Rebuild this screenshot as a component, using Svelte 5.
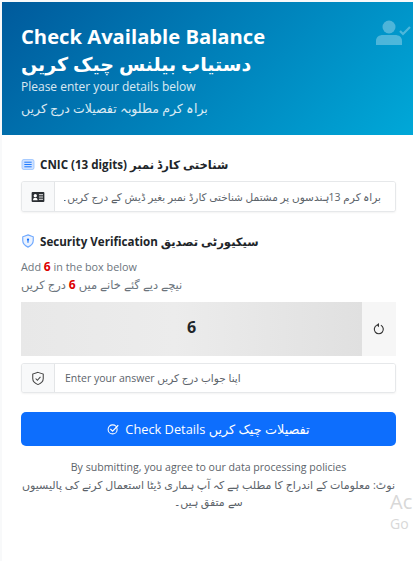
<script>
  let number = 6;
</script>

<div class="page">
  <header class="hero">
    <div class="hero-text">
      <h1>Check Available Balance</h1>
      <h2 lang="ur">دستیاب بیلنس چیک کریں</h2>
      <p>Please enter your details below</p>
      <p class="ur-sub" lang="ur">براہ کرم مطلوبہ تفصیلات درج کریں</p>
    </div>
    <svg class="hero-icon" viewBox="0 0 36 26" aria-hidden="true">
      <circle cx="14" cy="7" r="6.500" fill="currentColor" />
      <path d="M1 25v-4c0-4 3-6 7-6h12c4 0 7 2 7 6v4z" fill="currentColor" />
      <path d="M25 11l3 3 7-7" fill="none" stroke="currentColor" stroke-width="2.200" />
    </svg>
  </header>

  <main class="body">
    <label class="label" for="cnic">
      <svg class="lab-icon" viewBox="0 0 14 12" aria-hidden="true">
        <rect x="0.500" y="0.500" width="13" height="11" rx="2" fill="#cfe2ff" stroke="#9ec5fe" />
        <path d="M3 3.500h8M3 6h8M3 8.500h8" stroke="#0d6efd" />
      </svg>
      <span>CNIC (13 digits) شناختی کارڈ نمبر</span>
    </label>
    <div class="field">
      <span class="addon">
        <svg viewBox="0 0 14 11" width="14" height="10" aria-hidden="true">
          <rect width="14" height="11" rx="1" fill="#2b2f33" />
          <circle cx="4" cy="4" r="1.800" fill="#fff" />
          <path d="M1.500 9c0-2 1-2.800 2.500-2.800S6.500 7 6.500 9z" fill="#fff" />
          <path d="M8 3h4.500M8 5.500h4.500M8 8h4.500" stroke="#fff" />
        </svg>
      </span>
      <input id="cnic" class="ur-input" dir="rtl" placeholder="براہ کرم 13ہندسوں پر مشتمل شناختی کارڈ نمبر بغیر ڈیش کے درج کریں۔" />
    </div>

    <div class="label second">
      <svg class="lab-icon shield" viewBox="0 0 14 16" aria-hidden="true">
        <path d="M7 1l6 2.200v4.300c0 3.600-2.500 6-6 7.500-3.500-1.500-6-3.900-6-7.500V3.200z" fill="#eaf2ff" stroke="#6ea8fe" stroke-width="1.300" />
        <circle cx="7" cy="6.500" r="1.300" fill="#0d6efd" />
        <path d="M7 7.500v2.500" stroke="#0d6efd" stroke-width="1.200" />
      </svg>
      <span>Security Verification سیکیورٹی تصدیق</span>
    </div>
    <p class="hint">Add <b>{number}</b> in the box below</p>
    <p class="hint ur-hint">نیچے دیے گئے خانے میں <b>{number}</b> درج کریں</p>

    <div class="captcha">
      <div class="captcha-box">{number}</div>
      <button class="refresh" aria-label="Refresh">
        <svg viewBox="0 0 16 16" width="12" height="12" aria-hidden="true">
          <path d="M10.500 3A6 6 0 1 1 5 3" fill="none" stroke="#333" stroke-width="1.500" />
          <path d="M8 0v5.500L4.500 2.800z" fill="#333" />
        </svg>
      </button>
    </div>

    <div class="field answer">
      <span class="addon">
        <svg viewBox="0 0 16 16" width="14" height="15" aria-hidden="true">
          <path d="M8 1l6 2v5c0 3.300-2.500 5.600-6 7-3.500-1.400-6-3.700-6-7V3z" fill="none" stroke="#444" stroke-width="1.200" />
          <path d="M5.300 8l2 2 3.500-3.800" fill="none" stroke="#444" stroke-width="1.200" />
        </svg>
      </span>
      <input placeholder="Enter your answer اپنا جواب درج کریں" />
    </div>

    <button class="submit">
      <svg viewBox="0 0 16 16" width="12" height="12" aria-hidden="true">
        <circle cx="7.500" cy="8.500" r="6" fill="none" stroke="#fff" stroke-width="1.400" />
        <path d="M4.500 8l3 3L15 3" fill="none" stroke="#fff" stroke-width="1.600" />
      </svg>
      <span>Check Details تفصیلات چیک کریں</span>
    </button>

    <footer class="note">
      <p>By submitting, you agree to our data processing policies</p>
      <p class="ur-note" lang="ur">نوٹ: معلومات کے اندراج کا مطلب ہے کہ آپ ہماری ڈیٹا استعمال کرنے کی پالیسیوں سے متفق ہیں۔</p>
    </footer>
  </main>

  <div class="watermark" aria-hidden="true">
    <span class="wm-big">Ac</span>
    <span class="wm-small">Go</span>
  </div>
</div>

<style>
  :global(body) {
    margin: 0;
    background: #fff;
    overflow: hidden;
  }

  .page {
    position: relative;
    width: 413px;
    height: 561px;
    box-sizing: border-box;
    padding: 2px 0 0 2px;
    background: #f8f9fa;
    font-family: "Open Sans", "DejaVu Sans", sans-serif;
    color: #212529;
    overflow: hidden;
  }

  .hero {
    display: flex;
    justify-content: space-between;
    height: 133px;
    box-sizing: border-box;
    padding: 21px 2px 0 19px;
    background: linear-gradient(135deg, #005a9c, #00a8d8);
    color: #fff;
  }

  .hero h1 {
    margin: 0;
    font-size: 20.200px;
    font-weight: 700;
    line-height: 26px;
  }

  .hero h2 {
    margin: 0;
    font-size: 19px;
    font-weight: 700;
    line-height: 30px;
    direction: rtl;
    width: fit-content;
  }

  .hero p {
    margin: 0;
    font-size: 12px;
    line-height: 15px;
    opacity: 0.85;
  }

  .hero .ur-sub {
    margin-top: 5px;
    line-height: 20px;
    font-size: 12.500px;
    direction: rtl;
    width: fit-content;
  }

  .hero-icon {
    width: 36px;
    height: 26px;
    margin-top: -3px;
    color: rgba(255, 255, 255, 0.3);
  }

  .body {
    height: 426px;
    box-sizing: border-box;
    padding: 20px 17px 0 19px;
    background: #fff;
  }

  .label {
    display: flex;
    align-items: center;
    gap: 5px;
    height: 18px;
    font-size: 11.600px;
    font-weight: 700;
    color: #212529;
  }

  .label.second {
    margin-top: 20px;
  }

  .lab-icon {
    width: 14px;
    height: 11px;
    flex: none;
  }

  .lab-icon.shield {
    height: 14px;
  }

  .field {
    display: flex;
    box-sizing: border-box;
    height: 31px;
    margin-top: 8px;
    border: 1px solid #e6e8ea;
    border-radius: 3px;
    background: #fff;
    box-shadow: 0 1px 2px rgba(0, 0, 0, 0.05);
    overflow: hidden;
  }

  .addon {
    display: flex;
    align-items: center;
    justify-content: center;
    flex: none;
    width: 32px;
    background: #f8f9fa;
    border-right: 1px solid #e3e5e7;
  }

  input {
    flex: 1;
    min-width: 0;
    padding: 0 11px;
    border: 0;
    outline: 0;
    font-family: inherit;
    font-size: 10.500px;
    color: #333;
    background: #fff;
  }

  input::placeholder {
    color: #5c636a;
    opacity: 1;
  }

  .ur-input {
    font-size: 10.500px;
    padding: 0 14px 0 9px;
  }

  .hint {
    margin: 10px 0 0;
    font-size: 10.800px;
    line-height: 14px;
    color: #6c757d;
  }

  .hint b {
    font-size: 12px;
    color: #dc0000;
  }

  .ur-hint {
    margin-top: 4px;
    font-size: 11.500px;
    direction: rtl;
    width: fit-content;
  }

  .captcha {
    display: flex;
    height: 54px;
    margin-top: 10px;
    background: #f6f6f6;
  }

  .captcha-box {
    flex: 1;
    display: flex;
    align-items: center;
    justify-content: center;
    padding-bottom: 4px;
    font-size: 16px;
    font-weight: 700;
    color: #212529;
    background: linear-gradient(90deg, #e8e8e8, #ececec 45%, #e0e0e0);
  }

  .refresh {
    display: flex;
    align-items: center;
    justify-content: center;
    width: 34px;
    padding: 0;
    border: 0;
    background: #f6f6f6;
  }

  .answer {
    height: 30px;
    margin-top: 7px;
  }

  .answer input {
    padding-left: 10px;
  }

  .submit {
    display: flex;
    align-items: center;
    justify-content: center;
    gap: 6px;
    width: 100%;
    height: 34px;
    margin-top: 19px;
    border: 0;
    border-radius: 5px;
    background: #0d6efd;
    color: #fff;
    font-family: inherit;
    font-size: 12.800px;
  }

  .note {
    margin-top: 14px;
    text-align: center;
    font-size: 10.600px;
    color: #5c636a;
  }

  .note p {
    margin: 0;
    line-height: 15px;
  }

  .note .ur-note {
    margin-top: 1px;
    font-size: 11px;
    line-height: 17px;
    direction: rtl;
  }

  .watermark {
    position: absolute;
    left: 390px;
    top: 495px;
    display: flex;
    flex-direction: column;
    gap: 7px;
    color: #d8d8d8;
    white-space: nowrap;
  }

  .wm-big {
    font-size: 20px;
    line-height: 14px;
  }

  .wm-small {
    font-size: 14px;
    line-height: 16px;
  }
</style>
